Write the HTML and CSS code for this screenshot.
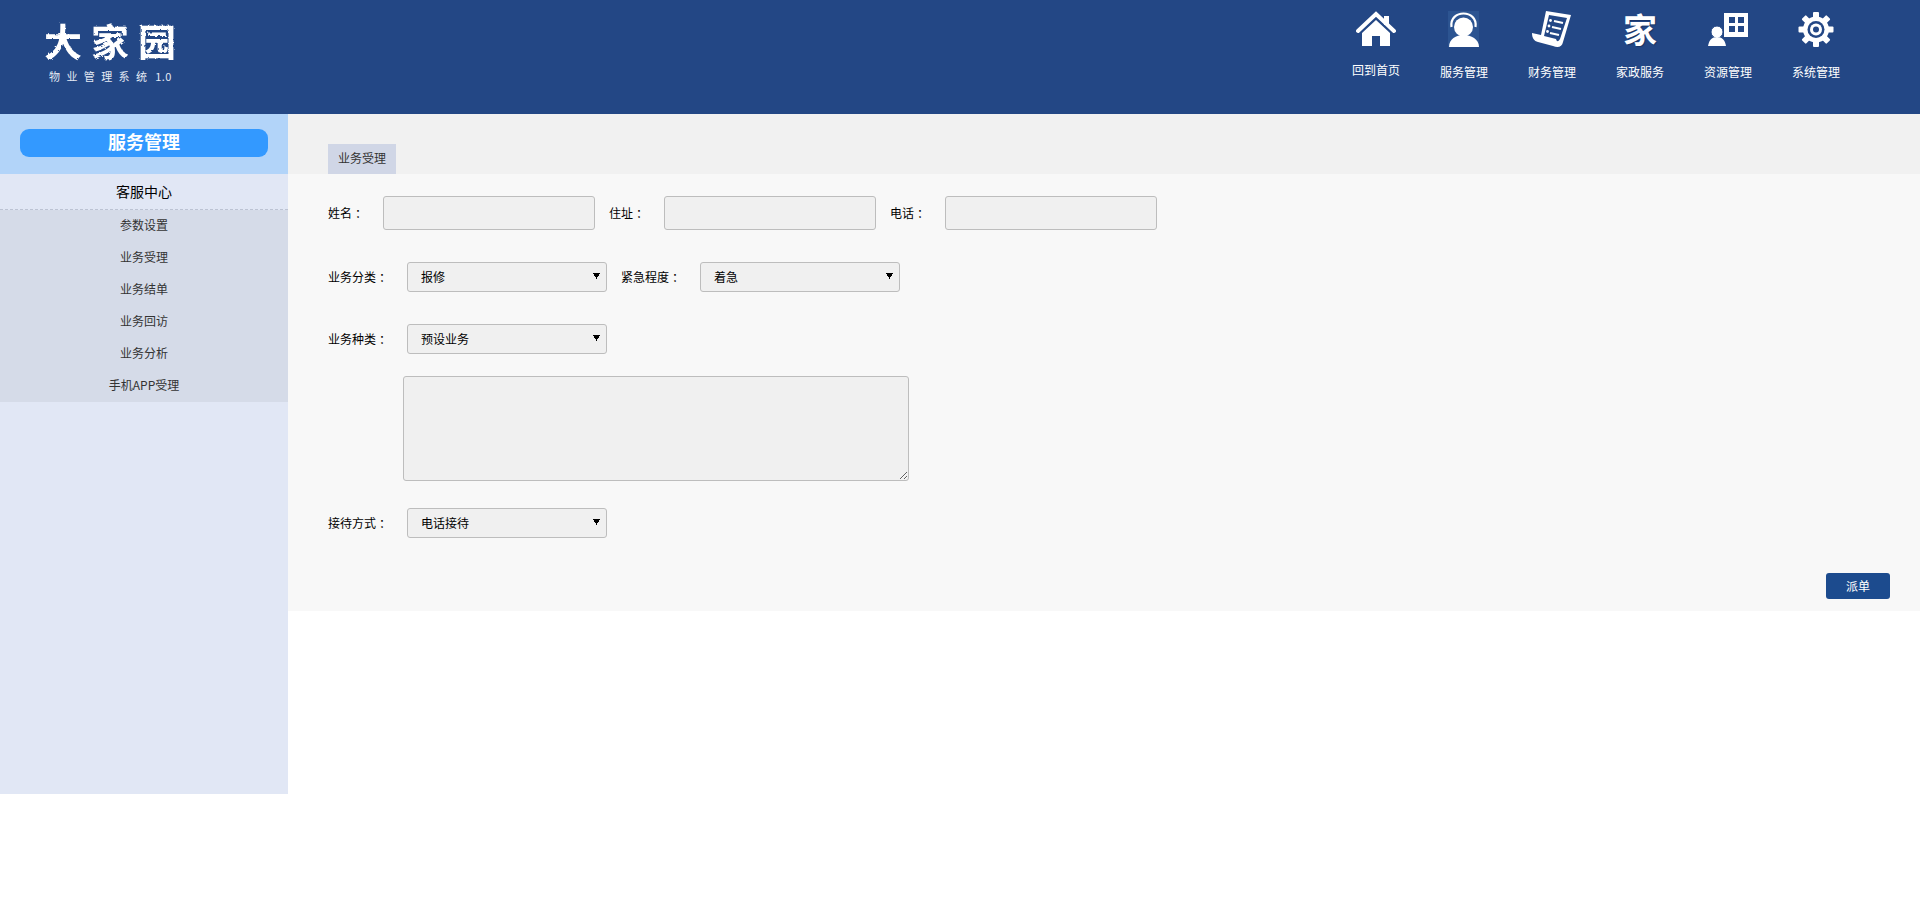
FILE: index.html
```html
<!DOCTYPE html>
<html lang="zh-CN">
<head>
<meta charset="utf-8">
<title>大家园物业管理系统</title>
<link rel="stylesheet" href="styles.css">
</head>
<body>
<svg class="defs" width="0" height="0" aria-hidden="true">
  <filter id="brush" x="-5%" y="-5%" width="110%" height="110%">
    <feTurbulence type="fractalNoise" baseFrequency="0.3" numOctaves="2" seed="4"/>
    <feDisplacementMap in="SourceGraphic" scale="3"/>
  </filter>
</svg>
<header class="topbar">
  <div class="brand">
    <div class="brand-name">大家园</div>
    <div class="brand-sub">物业管理系统 <span class="brand-ver">1.0</span></div>
  </div>
  <nav class="topnav">
    <a class="nav-item nav-home">
      <svg class="nav-icon" viewBox="0 0 40 36">
        <rect x="28" y="5" width="5" height="9" fill="#fff"/>
        <path d="M2 20 L20 3 L38 20" fill="none" stroke="#fff" stroke-width="4" stroke-linecap="round"/>
        <path d="M6 22 L20 9 L34 22 V35 H24 V25 H16 V35 H6 Z" fill="#fff"/>
      </svg>
      <span>回到首页</span>
    </a>
    <a class="nav-item">
      <svg class="nav-icon" viewBox="0 0 40 36">
        <rect x="4" y="0" width="31" height="36" fill="#2c5491"/>
        <path d="M7.5 16 C5 -2 34 -2 31.5 16" fill="none" stroke="#fff" stroke-width="2.2"/>
        <circle cx="19.5" cy="16" r="9.5" fill="#fff"/>
        <path d="M5 36 C5 28 12 24 19.5 24 C27 24 35 28 35 36 Z" fill="#fff"/>
      </svg>
      <span>服务管理</span>
    </a>
    <a class="nav-item">
      <svg class="nav-icon" viewBox="0 0 40 36">
        <path d="M14 0 L39 4 L31 31 C30 36 26 37 21 35 L6 31 C2 30 0 27 0 22 L9 24 Z" fill="#fff"/>
        <path d="M17 4 L35 7 L28 28 C26 31 25 31 24 28 L12 25 Z" fill="#234785"/>
        <path d="M22 10 L31 12 M20 16 L29 18 M18 22 L27 24" stroke="#fff" stroke-width="2.2"/>
        <circle cx="18.5" cy="9.5" r="1.4" fill="#fff"/>
        <circle cx="17" cy="15" r="1.4" fill="#fff"/>
        <circle cx="15.5" cy="20.5" r="1.4" fill="#fff"/>
      </svg>
      <span>财务管理</span>
    </a>
    <a class="nav-item">
      <span class="nav-glyph">家</span>
      <span>家政服务</span>
    </a>
    <a class="nav-item">
      <svg class="nav-icon" viewBox="0 0 40 36">
        <path d="M16 2 H40 V26 H16 Z M21 6 V12 H27 V6 Z M30 6 V12 H36 V6 Z M21 15 V21 H27 V15 Z M30 15 V21 H36 V15 Z" fill="#fff" fill-rule="evenodd"/>
        <circle cx="9" cy="21" r="6" fill="#fff" stroke="#234785" stroke-width="1"/>
        <path d="M0 35 C1 29 4 26 9 26 C14 26 17 29 18 35 Z" fill="#fff"/>
      </svg>
      <span>资源管理</span>
    </a>
    <a class="nav-item">
      <svg class="nav-icon" viewBox="0 0 40 36">
        <g fill="#fff">
          <rect x="17" y="1" width="6" height="35" rx="1"/>
          <rect x="17" y="1" width="6" height="35" rx="1" transform="rotate(45 20 18.5)"/>
          <rect x="17" y="1" width="6" height="35" rx="1" transform="rotate(90 20 18.5)"/>
          <rect x="17" y="1" width="6" height="35" rx="1" transform="rotate(135 20 18.5)"/>
          <circle cx="20" cy="18.5" r="13"/>
        </g>
        <circle cx="20" cy="18.5" r="8.5" fill="#234785"/>
        <circle cx="20" cy="18.5" r="6" fill="#fff"/>
        <circle cx="20" cy="18.5" r="3" fill="#234785"/>
      </svg>
      <span>系统管理</span>
    </a>
  </nav>
</header>
<div class="layout">
  <aside class="sidebar">
    <div class="side-head"><div class="side-pill">服务管理</div></div>
    <div class="side-title">客服中心</div>
    <ul class="side-list">
      <li>参数设置</li>
      <li>业务受理</li>
      <li>业务结单</li>
      <li>业务回访</li>
      <li>业务分析</li>
      <li>手机APP受理</li>
    </ul>
  </aside>
  <main class="main">
    <div class="tabs"><div class="tab">业务受理</div></div>
    <form class="form">
      <div class="row row-inputs">
        <label class="label label-short">姓名<span class="colon">：</span></label>
        <input class="field field-text" type="text">
        <label class="label label-short label-next">住址<span class="colon">：</span></label>
        <input class="field field-text" type="text">
        <label class="label label-short label-next">电话<span class="colon">：</span></label>
        <input class="field field-text" type="text">
      </div>
      <div class="row row-select">
        <label class="label label-long">业务分类<span class="colon">：</span></label>
        <select class="field field-select"><option>报修</option></select>
        <label class="label label-long label-next">紧急程度<span class="colon">：</span></label>
        <select class="field field-select"><option>着急</option></select>
      </div>
      <div class="row row-select">
        <label class="label label-long">业务种类<span class="colon">：</span></label>
        <select class="field field-select"><option>预设业务</option></select>
      </div>
      <textarea class="field field-area"></textarea>
      <div class="row row-last">
        <label class="label label-long">接待方式<span class="colon">：</span></label>
        <select class="field field-select"><option>电话接待</option></select>
      </div>
      <div class="actions"><button class="btn" type="button">派单</button></div>
    </form>
  </main>
</div>
</body>
</html>
```
FILE: styles.css
```css
* { box-sizing: border-box; }
html, body { margin: 0; padding: 0; }
body {
  background: #fff;
  color: #000;
  font-family: "Noto Sans CJK SC", "Liberation Sans", sans-serif;
  font-size: 12px;
}
.defs { display: block; height: 0; }

.topbar {
  display: flex;
  justify-content: space-between;
  height: 114px;
  background: #234785;
  color: #fff;
}
.brand { padding: 15px 0 0 44px; }
.brand-name {
  font-size: 38px;
  line-height: 50px;
  letter-spacing: 9px;
  font-weight: 700;
  filter: url(#brush);
}
.brand-sub {
  margin: 4px 0 0 5px;
  font-size: 11px;
  line-height: 14px;
  letter-spacing: 6.4px;
  color: #e4eaf4;
  white-space: nowrap;
}
.brand-ver { letter-spacing: 0.4px; margin-left: -7px; }
.topnav { display: flex; padding: 11px 60px 0 0; }
.nav-item {
  display: flex;
  flex-direction: column;
  align-items: center;
  width: 88px;
  color: #fff;
  line-height: 18px;
}
.nav-icon { display: block; width: 40px; height: 36px; margin-bottom: 16px; }
.nav-home .nav-icon { margin-bottom: 14px; }
.nav-glyph {
  display: block;
  height: 36px;
  margin-bottom: 16px;
  font-size: 34px;
  font-weight: 700;
  line-height: 36px;
  text-shadow: 1px 1px 1px #1a3565;
}

.layout { display: flex; align-items: flex-start; }
.sidebar {
  flex: none;
  width: 288px;
  height: 680px;
  background: #e1e7f5;
}
.side-head {
  height: 60px;
  padding: 15px 20px 0;
  background: #b2d4f9;
}
.side-pill {
  height: 28px;
  border-radius: 9px;
  background: #3399ff;
  color: #fff;
  font-size: 18px;
  font-weight: 700;
  line-height: 25px;
  text-align: center;
}
.side-title {
  height: 36px;
  border-bottom: 1px dashed #bcc3d3;
  font-size: 14px;
  line-height: 34px;
  text-align: center;
}
.side-list {
  margin: 0;
  padding: 0;
  list-style: none;
  background: #d5dbe8;
  color: #333;
}
.side-list li {
  height: 32px;
  line-height: 30px;
  text-align: center;
}

.main { flex: 1; min-width: 0; }
.tabs {
  display: flex;
  height: 60px;
  padding: 30px 0 0 40px;
  background: #f1f1f1;
}
.tab {
  width: 68px;
  height: 30px;
  background: #d0d6e6;
  color: #333;
  line-height: 28px;
  text-align: center;
}
.form {
  padding: 22px 30px 12px 40px;
  background: #f8f8f8;
}
.row { display: flex; align-items: center; }
.row-select { margin-top: 32px; }
.row-last { margin-top: 27px; }
.label { flex: none; line-height: 18px; }
.label-short { width: 55px; }
.label-long { width: 79px; }
.label-next { margin-left: 14px; }
.colon { margin-left: 3px; }
.field {
  display: block;
  flex: none;
  margin: 0;
  border: 1px solid #bdbdbd;
  border-radius: 3px;
  background-color: #f0f0f0;
  color: #000;
  font-family: inherit;
  font-size: 12px;
  outline: none;
}
.field-text { width: 212px; height: 34px; padding: 0 8px; }
.field-select {
  width: 200px;
  height: 30px;
  padding: 0 0 2px 13px;
  appearance: none;
  -webkit-appearance: none;
  background-image: conic-gradient(from -31deg at 50% 100%, #000 62deg, transparent 0);
  background-repeat: no-repeat;
  background-size: 7px 6px;
  background-position: right 6px top 10px;
}
.field-area { width: 506px; height: 105px; margin: 22px 0 0 75px; }
.actions { display: flex; justify-content: flex-end; margin-top: 35px; }
.btn {
  width: 64px;
  height: 26px;
  padding: 0 0 1px;
  border: 0;
  border-radius: 3px;
  background: #1c4b8e;
  color: #fff;
  font-family: inherit;
  font-size: 12px;
}
```
